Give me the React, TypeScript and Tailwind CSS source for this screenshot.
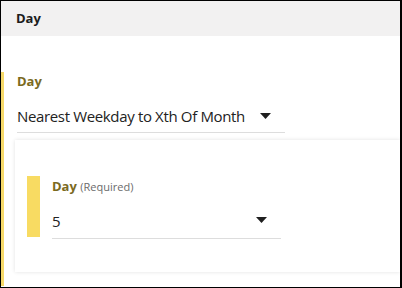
function Caret() {
  return (
    <svg width="11" height="6" viewBox="0 0 11 6" className="shrink-0">
      <path d="M0 0h11L5.5 6z" fill="#1f1f1f" />
    </svg>
  );
}

export default function App() {
  return (
    <div className="w-[402px] h-[288px] overflow-hidden border border-black border-r-2 bg-white font-['Open_Sans',sans-serif] text-[#222]">
      <div className="h-[35px] bg-[#f2f1f1] px-[15px] flex items-center text-[13px] font-bold text-[#1c1c1c]">
        Day
      </div>

      <div className="mt-[36px] border-l-[3px] border-[#f6d96a] pb-[14px]">
        <div className="pl-[13px] text-[13px] font-bold text-[#7b6a1e] leading-[18px]">Day</div>
        <div className="ml-[13px] mt-[15px] w-[268px] h-[28px] border-b border-[#dddddd] flex items-start justify-between pr-[14px]">
          <span className="text-[15px] leading-[22px] tracking-[-0.35px]">Nearest Weekday to Xth Of Month</span>
          <span className="pt-[8px]">
            <Caret />
          </span>
        </div>

        <div className="ml-[11px] mt-[7px] h-[132px] bg-white shadow-[0_0_4px_rgba(0,0,0,0.12)] pt-[36px] pl-[12px]">
          <div className="flex">
            <div className="w-[13px] h-[61px] bg-[#f8db62]" />
            <div className="ml-[12px]">
              <div className="text-[13px] leading-[20px]">
                <span className="font-bold text-[#7b6a1e]">Day</span>{" "}
                <span className="text-[11px] text-[#6b6b6b]">(Required)</span>
              </div>
              <div className="mt-[13px] w-[229px] h-[29px] border-b border-[#dddddd] flex items-start justify-between pr-[14px]">
                <span className="text-[15px] leading-[22px]">5</span>
                <span className="pt-[7px]">
                  <Caret />
                </span>
              </div>
            </div>
          </div>
        </div>
      </div>
    </div>
  );
}
